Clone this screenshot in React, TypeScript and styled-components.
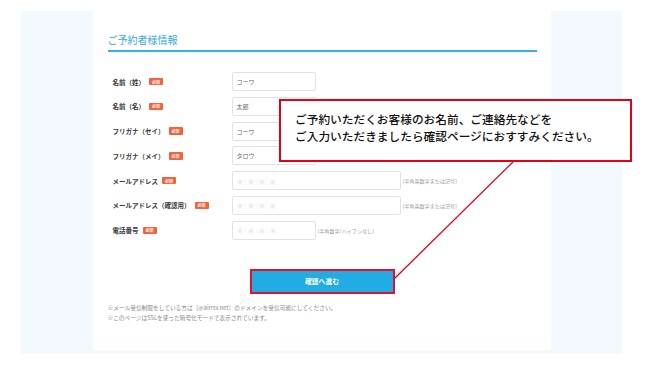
import { Fragment } from "react";
import styled, { createGlobalStyle } from "styled-components";

const GlobalStyle = createGlobalStyle`
  html, body {
    margin: 0;
    padding: 0;
    background: #ffffff;
  }
  body {
    font-family: "Noto Sans CJK JP", "Noto Sans", "Liberation Sans", sans-serif;
  }
`;

const Page = styled.div`
  position: relative;
  width: 649px;
  height: 365px;
  box-sizing: border-box;
  padding: 11px 27px 11px 21px;
  overflow: hidden;
`;

const Panel = styled.div`
  height: 100%;
  background: #f3f9fe;
  display: flex;
  justify-content: center;
`;

const Column = styled.div`
  width: 458px;
  height: 339px;
  background: #ffffff;
  box-sizing: border-box;
  padding: 22px 14px 0 15px;
`;

const Heading = styled.h2`
  margin: 0;
  font-size: 10px;
  font-weight: 400;
  line-height: 14px;
  color: #3aa8dd;
  padding-bottom: 3px;
  border-bottom: 2px solid #35b2e4;
`;

const Form = styled.div`
  display: grid;
  grid-template-columns: 119px 1fr;
  grid-auto-rows: 19px;
  row-gap: 5.8px;
  margin-top: 20px;
  padding-left: 5px;
`;

const Label = styled.div`
  display: flex;
  align-items: center;
  gap: 4px;
  font-size: 6.5px;
  font-weight: 700;
  color: #3a3a3a;
`;

const Badge = styled.span`
  display: inline-flex;
  align-items: center;
  justify-content: center;
  width: 14px;
  height: 7.5px;
  border-radius: 1px;
  background: #f2623c;
  color: #ffffff;
  font-size: 4px;
  font-weight: 700;
`;

const Field = styled.div`
  display: flex;
  align-items: center;
  gap: 2px;
`;

const Input = styled.div<{ $wide?: boolean }>`
  width: ${(p) => (p.$wide ? 169 : 84)}px;
  height: 19px;
  box-sizing: border-box;
  border: 1px solid #e2e2e2;
  border-radius: 2px;
  background: #ffffff;
  display: flex;
  align-items: center;
  padding-left: 4px;
  font-size: 6px;
  color: #666666;
`;

const Blurred = styled.span`
  color: #b8b8b8;
  font-size: 7px;
  letter-spacing: 1px;
  filter: blur(0.9px);
`;

const Hint = styled.span`
  font-size: 5.1px;
  color: #9a9a9a;
  white-space: nowrap;
`;

const ButtonRow = styled.div`
  display: flex;
  justify-content: center;
  margin-top: 29px;
`;

const Button = styled.button`
  width: 145px;
  height: 25px;
  box-sizing: border-box;
  border: 2px solid #e3112a;
  background: #21ace3;
  color: #ffffff;
  font-family: inherit;
  font-size: 6.8px;
  font-weight: 700;
  padding: 0;
`;

const Notes = styled.div`
  margin-top: 9px;
  font-size: 5.7px;
  line-height: 10px;
  color: #8a8a8a;
`;

const Callout = styled.div`
  position: absolute;
  left: 279px;
  top: 99px;
  width: 353px;
  height: 63px;
  box-sizing: border-box;
  border: 2px solid #e60012;
  background: #ffffff;
  padding: 10px 0 0 14px;
  font-size: 11.7px;
  font-weight: 500;
  line-height: 16.5px;
  color: #111111;
  white-space: nowrap;
`;

const Leader = styled.svg`
  position: absolute;
  left: 0;
  top: 0;
  pointer-events: none;
`;

type Row = {
  label: string;
  value?: string;
  wide?: boolean;
  hint?: string;
};

const rows: Row[] = [
  { label: "名前（姓）", value: "コーワ" },
  { label: "名前（名）", value: "太郎" },
  { label: "フリガナ（セイ）", value: "コーワ" },
  { label: "フリガナ（メイ）", value: "タロウ" },
  { label: "メールアドレス", wide: true, hint: "(半角英数字または記号)" },
  { label: "メールアドレス（確認用）", wide: true, hint: "(半角英数字または記号)" },
  { label: "電話番号", hint: "(半角数字/ハイフンなし)" },
];

export default function App() {
  return (
    <>
      <GlobalStyle />
      <Page>
        <Panel>
          <Column>
            <Heading>ご予約者様情報</Heading>
            <Form>
              {rows.map((r) => (
                <Fragment key={r.label}>
                  <Label>
                    {r.label}
                    <Badge>必須</Badge>
                  </Label>
                  <Field>
                    <Input $wide={r.wide}>
                      {r.value ?? <Blurred>ｘ:ｘ:ｘ:ｘ</Blurred>}
                    </Input>
                    {r.hint && <Hint>{r.hint}</Hint>}
                  </Field>
                </Fragment>
              ))}
            </Form>
            <ButtonRow>
              <Button>確認へ進む</Button>
            </ButtonRow>
            <Notes>
              <div>※メール受信制限をしている方は［@airrsv.net］のドメインを受信可能にしてください。</div>
              <div>※このページはSSLを使った暗号化モードで表示されています。</div>
            </Notes>
          </Column>
        </Panel>
        <Leader width="649" height="365" viewBox="0 0 649 365">
          <line x1="513" y1="162" x2="394" y2="279" stroke="#e60012" strokeWidth="1.3" />
        </Leader>
        <Callout>
          ご予約いただくお客様のお名前、ご連絡先などを
          <br />
          ご入力いただきましたら確認ページにおすすみください。
        </Callout>
      </Page>
    </>
  );
}
